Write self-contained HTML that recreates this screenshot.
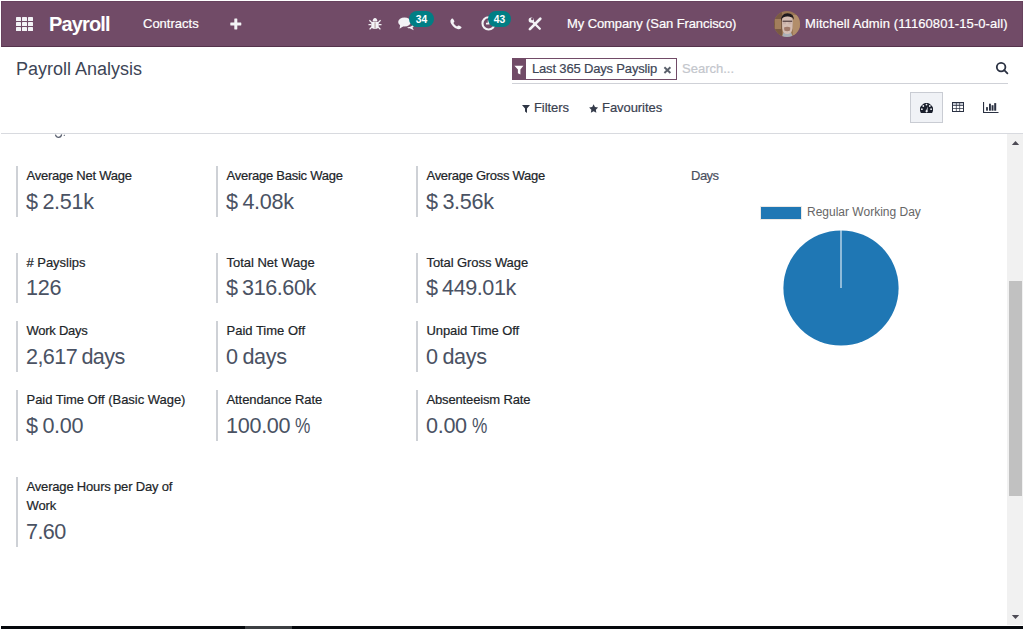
<!DOCTYPE html>
<html><head><meta charset="utf-8">
<style>
*{box-sizing:border-box;margin:0;padding:0}
.a{-webkit-text-stroke:0.2px currentColor}
html,body{width:1024px;height:630px;overflow:hidden;background:#fff;font-family:"Liberation Sans",sans-serif}
.a{position:absolute;white-space:nowrap}
#nav{position:absolute;left:1px;top:1px;width:1022px;height:46px;background:#714b67;border:1px solid #68425e;border-bottom-color:#55334c}
.nt{color:#fff;font-size:13px;line-height:13px}
.badge{position:absolute;height:16px;border-radius:8px;background:#017e84;color:#fff;font-weight:bold;font-size:10.3px;line-height:17px;text-align:center;-webkit-text-stroke:0}
.lbl{font-size:13px;line-height:13px;color:#212529}
.val{font-size:21.6px;line-height:21px;color:#4a5263;-webkit-text-stroke:0}
.pc{display:inline-block;width:14.5px;transform:scaleX(0.8);transform-origin:0 0}
.bl{position:absolute;width:2px;background:#ced1d6}
</style></head><body>

<div id="nav"></div>
<!-- apps grid -->
<svg class="a" style="left:16px;top:17px" width="17" height="14" viewBox="0 0 17 14" fill="#f3f3f6">
<rect x="0" y="0" width="5" height="4" rx="0.6"/><rect x="6" y="0" width="5" height="4" rx="0.6"/><rect x="12" y="0" width="5" height="4" rx="0.6"/>
<rect x="0" y="5" width="5" height="4" rx="0.6"/><rect x="6" y="5" width="5" height="4" rx="0.6"/><rect x="12" y="5" width="5" height="4" rx="0.6"/>
<rect x="0" y="10" width="5" height="4" rx="0.6"/><rect x="6" y="10" width="5" height="4" rx="0.6"/><rect x="12" y="10" width="5" height="4" rx="0.6"/>
</svg>
<div class="a nt" style="left:49px;top:14px;font-size:20px;line-height:20px;font-weight:bold;letter-spacing:-0.87px;-webkit-text-stroke:0">Payroll</div>
<div class="a nt" style="left:143px;top:17px">Contracts</div>
<!-- plus -->
<svg class="a" style="left:230px;top:18px" width="12" height="12" viewBox="0 0 12 12" fill="#f3f3f6"><rect x="4.3" y="0.5" width="3" height="11" rx="0.4"/><rect x="0.3" y="4.5" width="11" height="3" rx="0.4"/></svg>

<!-- bug -->
<svg class="a" style="left:368px;top:17px" width="14" height="14" viewBox="0 0 14 14" fill="#f3f3f6">
<path d="M4.6 4.6 Q4.8 0.9 7 0.9 Q9.2 0.9 9.4 4.6Z"/>
<path d="M3.3 4.9h7.4v4.4q0 2.6-3.7 2.6q-3.7 0-3.7-2.6Z"/>
<path d="M3.8 5.6L1.4 3.3M10.2 5.6L12.6 3.3M3.4 7.6H0.5M10.6 7.6H13.5M3.8 10L1.6 12.4M10.2 10L12.4 12.4" stroke="#f3f3f6" stroke-width="1.3"/>
<rect x="6.6" y="5.4" width="0.9" height="6.2" fill="#a58c8c"/>
</svg>
<!-- comments -->
<svg class="a" style="left:398px;top:16px" width="17" height="15" viewBox="0 0 17 15" fill="#f3f3f6">
<ellipse cx="6.5" cy="6" rx="6.3" ry="4.6"/><path d="M2.2 8.5 L1.6 12.8 L6 9.8Z"/>
<path d="M9 11.2 c3 0 6.2-1.2 6.2-4 l1 1.2 c0 1.6-0.8 2.6-1.8 3.2 l1.4 2.6 l-3.6-1.8 c-1.2 0-2.4-0.4-3.2-1.2Z"/>
</svg>
<div class="badge" style="left:409px;top:11px;width:25px">34</div>
<!-- phone -->
<svg class="a" style="left:449.5px;top:17.5px" width="12" height="12" viewBox="0 0 12 12" fill="#f3f3f6">
<path d="M1.2 1.2 Q0 2.2 0.5 4.2 Q2 9 7.5 11 Q9.5 11.6 10.8 10.6 L11.5 9.8 Q11.7 9.2 11.1 8.8 L9 7.6 Q8.4 7.3 7.9 7.8 L7 8.6 Q4.6 7.4 3.4 5 L4.2 4 Q4.6 3.4 4.2 2.8 L3 0.8 Q2.5 0.2 1.9 0.6 Z"/>
</svg>
<!-- clock -->
<svg class="a" style="left:481px;top:16px" width="15" height="15" viewBox="0 0 15 15" fill="none" stroke="#f3f3f6">
<circle cx="7.6" cy="7.4" r="6.1" stroke-width="2.1"/><path d="M7.6 4.2v3.4h-2.6" stroke-width="1.7"/>
</svg>
<div class="badge" style="left:488px;top:11px;width:23px">43</div>
<!-- tools -->
<svg class="a" style="left:524px;top:13px" width="22" height="22" viewBox="0 0 22 22">
<path d="M9 9 L15.8 15.8" stroke="#f3f3f6" stroke-width="2.3" stroke-linecap="round"/>
<circle cx="7.3" cy="7.1" r="2.7" fill="#f3f3f6"/>
<circle cx="8.3" cy="5.9" r="1.25" fill="#714b67"/>
<path d="M8.6 4.2 L10.4 2.6 L11.2 4.8 Z" fill="#714b67"/>
<path d="M16.3 5.7 L5.9 16.1" stroke="#f3f3f6" stroke-width="2.7" stroke-linecap="round"/>
</svg>
<div class="a nt" style="left:567px;top:17px;letter-spacing:-0.1px">My Company (San Francisco)</div>
<!-- avatar -->
<div class="a" style="left:774px;top:11px;width:26px;height:26px;border-radius:50%;overflow:hidden"><svg style="display:block" width="26" height="26" viewBox="0 0 26 26">
<g>
<rect width="26" height="26" fill="#9a7756"/>
<rect x="0" y="0" width="8" height="26" fill="#7a5a42"/>
<rect x="1" y="8" width="6" height="10" fill="#a27e5c"/>
<rect x="19" y="4" width="7" height="20" fill="#b28e6a"/>
<path d="M7 10 Q7 2.5 13.5 2.2 Q20 2.5 20 9 L18.5 6.5 Q13 4.6 8.5 7Z" fill="#1e1a1e"/>
<path d="M8 9 Q8 5.5 13.5 5.4 Q18.8 5.5 18.8 9.5 L18.6 17 Q17.5 24 13.2 24 Q9 24 8.2 17Z" fill="#d4beb4"/>
<rect x="8.6" y="9.6" width="9.6" height="1.3" fill="#5a4646"/>
<rect x="9" y="11" width="3" height="2.2" fill="#c9b0a8"/><rect x="14.4" y="11" width="3" height="2.2" fill="#c9b0a8"/>
<path d="M10 16.5 Q13.2 15.2 16.4 16.5 L16 19.5 Q13.2 20.8 10.4 19.5Z" fill="#a07a6a"/>
<path d="M8 26 L9.5 21.5 Q13 24.5 17 21.5 L19 26Z" fill="#aab0b8"/>
</g></svg></div>
<div class="a nt" style="left:805px;top:17px;letter-spacing:0.09px">Mitchell Admin (11160801-15-0-all)</div>

<!-- control panel -->
<div class="a" style="left:16px;top:60px;font-size:18px;line-height:18px;color:#3d4556;letter-spacing:-0.01px;-webkit-text-stroke:0">Payroll Analysis</div>
<div class="a" style="left:512px;top:58px;width:165px;height:22px;border:1px solid #714b67"></div>
<div class="a" style="left:512px;top:58px;width:14px;height:22px;background:#714b67"></div>
<svg class="a" style="left:514px;top:64.7px" width="10" height="10" viewBox="0 0 10 10" fill="#fff"><path d="M0.4 0.8h9L6.4 4.6v4.9L3.9 8.2V4.6Z"/></svg>
<div class="a" style="left:532px;top:62px;font-size:13px;line-height:13px;color:#3d4556;letter-spacing:-0.17px">Last 365 Days Payslip</div>
<svg class="a" style="left:663px;top:66px" width="9" height="8" viewBox="0 0 9 8" stroke="#5b616c" stroke-width="1.9"><path d="M1.4 1.2L7.4 7M7.4 1.2L1.4 7"/></svg>
<div class="a" style="left:682px;top:62px;font-size:13px;line-height:13px;color:#c3c6cc">Search...</div>
<svg class="a" style="left:995px;top:61px" width="14" height="14" viewBox="0 0 14 14" fill="none" stroke="#2a3142" stroke-width="1.8"><circle cx="6.1" cy="6.1" r="4.3"/><path d="M9.2 9.2L12.4 12.4" stroke-linecap="round"/></svg>
<div class="a" style="left:512px;top:83px;width:496px;height:1px;background:#cfd1d7"></div>

<svg class="a" style="left:522px;top:105px" width="8" height="8" viewBox="0 0 8 8" fill="#2f3645"><path d="M0 0h8L5 3.6V8L3 6.6V3.6Z"/></svg>
<div class="a" style="left:534px;top:101px;font-size:13px;line-height:13px;color:#3a4150;letter-spacing:-0.08px">Filters</div>
<svg class="a" style="left:588.6px;top:103.9px" width="10" height="10" viewBox="0 0 10 10" fill="#353c4b"><path d="M4.60 0.20 L5.98 3.00 L9.07 3.45 L6.83 5.63 L7.36 8.70 L4.60 7.25 L1.84 8.70 L2.37 5.63 L0.13 3.45 L3.22 3.00Z"/></svg>
<div class="a" style="left:602px;top:101px;font-size:13px;line-height:13px;color:#3a4150;letter-spacing:-0.06px">Favourites</div>

<div class="a" style="left:910px;top:92px;width:33px;height:31px;border:1px solid #c9ccd3;background:#f0f2f6"></div>
<svg class="a" style="left:920px;top:102.8px" width="13" height="10" viewBox="0 0 13 10"><path d="M0.9 9.9 A6.5 6.5 0 1 1 12.1 9.9 Z" fill="#1a1f2c"/><g fill="#f0f2f6"><circle cx="1.9" cy="6.2" r="0.9"/><circle cx="3.3" cy="3" r="0.9"/><circle cx="6.5" cy="1.6" r="0.9"/><circle cx="9.8" cy="3" r="0.9"/><circle cx="11.1" cy="6.2" r="0.9"/><path d="M5.9 8.2 L7.7 3.4 L7.4 8.4 Z"/><circle cx="6.6" cy="8.3" r="1.1"/></g></svg>
<svg class="a" style="left:952px;top:102px" width="12" height="10" viewBox="0 0 12 10"><rect x="0" y="0" width="12" height="10" fill="#2a3142"/><g fill="#fff"><rect x="1" y="1" width="2.9" height="2.2" fill="#c5c9d2"/><rect x="4.6" y="1" width="2.8" height="2.2" fill="#c5c9d2"/><rect x="8.1" y="1" width="2.9" height="2.2" fill="#c5c9d2"/><rect x="1" y="3.9" width="2.9" height="2.3"/><rect x="4.6" y="3.9" width="2.8" height="2.3"/><rect x="8.1" y="3.9" width="2.9" height="2.3"/><rect x="1" y="6.9" width="2.9" height="2.1"/><rect x="4.6" y="6.9" width="2.8" height="2.1"/><rect x="8.1" y="6.9" width="2.9" height="2.1"/></g></svg>
<svg class="a" style="left:983px;top:102px" width="16" height="11" viewBox="0 0 16 11" fill="#2a3142"><rect x="0" y="0" width="1.1" height="11"/><rect x="0" y="10" width="15.5" height="1"/><rect x="3.1" y="5.1" width="1.8" height="3.6"/><rect x="6" y="1.7" width="1.9" height="7"/><rect x="8.6" y="3.2" width="1.9" height="5.5"/><rect x="11.2" y="1.1" width="2" height="7.6"/></svg>

<div class="a" style="left:1px;top:133px;width:1022px;height:1px;background:#d8dadf"></div>

<!-- content -->
<svg class="a" style="left:54px;top:133.6px" width="16" height="5" viewBox="0 0 16 5" fill="none" stroke="#5b6170" stroke-width="1.2"><path d="M1.4 0.6 Q2.2 3.4 4.6 3.4 Q7.2 3.4 7.6 0.4"/><path d="M10.4 0.8 L10.2 2" stroke-width="1"/></svg>
<div class="bl" style="left:16px;top:166px;height:51px"></div>
<div class="bl" style="left:216px;top:166px;height:51px"></div>
<div class="bl" style="left:416px;top:166px;height:51px"></div>
<div class="a lbl" style="left:26.5px;top:169px;letter-spacing:-0.25px">Average Net Wage</div>
<div class="a lbl" style="left:226.5px;top:169px;letter-spacing:-0.25px">Average Basic Wage</div>
<div class="a lbl" style="left:426.5px;top:169px;letter-spacing:-0.29px">Average Gross Wage</div>
<div class="a val" style="left:26px;top:191px;letter-spacing:-0.3px;word-spacing:-1px">$ 2.51k</div>
<div class="a val" style="left:226px;top:191px;letter-spacing:-0.3px;word-spacing:-1px">$ 4.08k</div>
<div class="a val" style="left:426px;top:191px;letter-spacing:-0.3px;word-spacing:-1px">$ 3.56k</div>

<div class="bl" style="left:16px;top:253px;height:50px"></div>
<div class="bl" style="left:216px;top:253px;height:50px"></div>
<div class="bl" style="left:416px;top:253px;height:50px"></div>
<div class="a lbl" style="left:26.5px;top:256px;letter-spacing:-0.03px"># Payslips</div>
<div class="a lbl" style="left:226.5px;top:256px;letter-spacing:-0.02px">Total Net Wage</div>
<div class="a lbl" style="left:426.5px;top:256px;letter-spacing:-0.08px">Total Gross Wage</div>
<div class="a val" style="left:26px;top:277px;letter-spacing:-0.3px;word-spacing:-1px">126</div>
<div class="a val" style="left:226px;top:277px;letter-spacing:-0.45px;word-spacing:-1px">$ 316.60k</div>
<div class="a val" style="left:426px;top:277px;letter-spacing:-0.45px;word-spacing:-1px">$ 449.01k</div>

<div class="bl" style="left:16px;top:321px;height:51px"></div>
<div class="bl" style="left:216px;top:321px;height:51px"></div>
<div class="bl" style="left:416px;top:321px;height:51px"></div>
<div class="a lbl" style="left:26.5px;top:324px;letter-spacing:-0.25px">Work Days</div>
<div class="a lbl" style="left:226.5px;top:324px;letter-spacing:0.0px">Paid Time Off</div>
<div class="a lbl" style="left:426.5px;top:324px;letter-spacing:-0.08px">Unpaid Time Off</div>
<div class="a val" style="left:26px;top:346px;letter-spacing:-0.6px;word-spacing:-1px">2,617 days</div>
<div class="a val" style="left:226px;top:346px;letter-spacing:-0.3px;word-spacing:-1px">0 days</div>
<div class="a val" style="left:426px;top:346px;letter-spacing:-0.3px;word-spacing:-1px">0 days</div>

<div class="bl" style="left:16px;top:390px;height:51px"></div>
<div class="bl" style="left:216px;top:390px;height:51px"></div>
<div class="bl" style="left:416px;top:390px;height:51px"></div>
<div class="a lbl" style="left:26.5px;top:393px;letter-spacing:-0.03px">Paid Time Off (Basic Wage)</div>
<div class="a lbl" style="left:226.5px;top:393px;letter-spacing:-0.08px">Attendance Rate</div>
<div class="a lbl" style="left:426.5px;top:393px;letter-spacing:-0.15px">Absenteeism Rate</div>
<div class="a val" style="left:26px;top:415px;letter-spacing:-0.3px;word-spacing:-1px">$ 0.00</div>
<div class="a val" style="left:226px;top:415px;letter-spacing:-0.3px;word-spacing:-1px">100.00 <span class="pc">%</span></div>
<div class="a val" style="left:426px;top:415px;letter-spacing:-0.3px;word-spacing:-1px">0.00 <span class="pc">%</span></div>

<div class="bl" style="left:16px;top:477px;height:70px"></div>
<div class="a lbl" style="left:26.5px;top:480px;letter-spacing:-0.18px">Average Hours per Day of</div>
<div class="a lbl" style="left:26.5px;top:499px;letter-spacing:-0.14px">Work</div>
<div class="a val" style="left:26px;top:521px;letter-spacing:-0.6px;word-spacing:-1px">7.60</div>

<!-- pie chart -->
<div class="a" style="left:691px;top:169px;font-size:13px;line-height:13px;color:#4a5060;letter-spacing:-0.5px">Days</div>
<div class="a" style="left:760px;top:206px;width:42px;height:14px;background:#1f77b4;border:1px solid #ebe8e5"></div>
<div class="a" style="left:807px;top:206px;font-size:12px;line-height:12px;color:#666;-webkit-text-stroke:0">Regular Working Day</div>
<svg class="a" style="left:782px;top:229px" width="118" height="118" viewBox="0 0 118 118">
<circle cx="59" cy="59" r="57.6" fill="#1f77b4"/>
<rect x="58.5" y="1" width="1" height="58" fill="#fff"/>
</svg>

<!-- scrollbar -->
<div class="a" style="left:1007px;top:134px;width:16px;height:491px;background:#f1f1f1"></div>
<svg class="a" style="left:1011px;top:140px" width="9" height="6" viewBox="0 0 9 6" fill="#4d4b55"><path d="M0.8 5L4.5 1L8.2 5Z"/></svg>
<div class="a" style="left:1009px;top:281px;width:13px;height:215px;background:#c1c1c1"></div>
<svg class="a" style="left:1011px;top:614px" width="9" height="6" viewBox="0 0 9 6" fill="#4d4b55"><path d="M0.8 1L4.5 5L8.2 1Z"/></svg>

<!-- bottom bar -->
<div class="a" style="left:1px;top:626px;width:1022px;height:3px;background:#05080c"></div>
<div class="a" style="left:245px;top:626px;width:47px;height:3px;background:#3c3f42"></div>
</body></html>
